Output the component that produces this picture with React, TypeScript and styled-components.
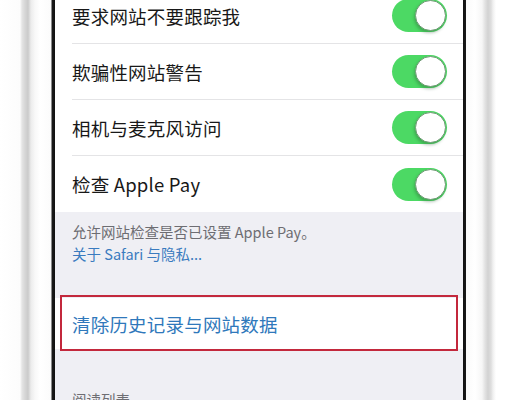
import React from "react";
import styled, { createGlobalStyle } from "styled-components";

const GlobalStyle = createGlobalStyle`
  html, body {
    margin: 0;
    padding: 0;
    background: #ffffff;
  }
  body {
    font-family: "Noto Sans CJK SC", "Noto Sans", sans-serif;
  }
`;

const toggles = ["要求网站不要跟踪我", "欺骗性网站警告", "相机与麦克风访问", "检查 Apple Pay"];

const App = () => {
  return (
    <>
      <GlobalStyle />
      <Photo>
        <LeftBezel />
        <Screen>
          <Group>
            {toggles.map((label, i) => (
              <Row key={label} last={i === toggles.length - 1}>
                <Label>{label}</Label>
                <Switch>
                  <Knob />
                </Switch>
              </Row>
            ))}
          </Group>
          <Footer>
            <FooterText>允许网站检查是否已设置 Apple Pay。</FooterText>
            <FooterLink>关于 Safari 与隐私...</FooterLink>
          </Footer>
          <ActionCell>
            <ActionText>清除历史记录与网站数据</ActionText>
            <Highlight />
          </ActionCell>
          <SectionHeader>阅读列表</SectionHeader>
        </Screen>
        <RightBezel />
      </Photo>
    </>
  );
};

export default App;

const Photo = styled.div`
  width: 518px;
  height: 400px;
  display: flex;
  overflow: hidden;
  background: #ffffff;
`;

const LeftBezel = styled.div`
  width: 55px;
  flex-shrink: 0;
  background: linear-gradient(
    to right,
    #ffffff 0px,
    #fcfcfc 20px,
    #e4e4e4 22px,
    #d6d6d6 25px,
    #cacaca 28px,
    #ececec 31px,
    #f8f8f8 35px,
    #ffffff 40px,
    #fbfbfb 51px,
    #1a1a1a 52px,
    #111111 55px
  );
`;

const RightBezel = styled.div`
  width: 55px;
  flex-shrink: 0;
  background: linear-gradient(
    to right,
    #111111 0px,
    #1a1a1a 3px,
    #fafafa 3px,
    #ffffff 12px,
    #f6f6f6 19px,
    #e2e2e2 22px,
    #d2d2d2 25px,
    #dedede 28px,
    #f0f0f0 30px,
    #ffffff 33px
  );
`;

const Screen = styled.div`
  flex: 1;
  background: #efeff4;
  display: flex;
  flex-direction: column;
  overflow: hidden;

  & > * {
    flex-shrink: 0;
  }
`;

const Group = styled.div`
  background: #ffffff;
  margin-top: -12px;
`;

const Row = styled.div<{ last?: boolean }>`
  height: 56px;
  display: flex;
  align-items: center;
  justify-content: space-between;
  margin-left: 17px;
  padding-right: 16px;
  border-bottom: ${(p) => (p.last ? "none" : "1px solid #e4e4e6")};
  box-sizing: border-box;
`;

const Label = styled.span`
  font-size: 18.5px;
  color: #181818;
  letter-spacing: 0.2px;
`;

const Switch = styled.div`
  width: 55px;
  height: 33px;
  border-radius: 17px;
  background: #4cd964;
  display: flex;
  align-items: center;
  justify-content: flex-end;
  padding: 1px;
  box-sizing: border-box;
`;

const Knob = styled.div`
  width: 31px;
  height: 31px;
  border-radius: 50%;
  background: #ffffff;
  box-sizing: border-box;
  border: 1.5px solid #6f9a74;
  box-shadow: -1px 2px 3px rgba(40, 90, 50, 0.35);
`;

const Footer = styled.div`
  padding: 9px 17px 0;
  height: 86px;
  box-sizing: border-box;
  display: flex;
  flex-direction: column;
`;

const FooterText = styled.div`
  font-size: 14.5px;
  line-height: 22px;
  color: #6d6d72;
`;

const FooterLink = styled.div`
  font-size: 14.5px;
  line-height: 22px;
  color: #3a7bbf;
`;

const ActionCell = styled.div`
  position: relative;
  height: 51px;
  background: #ffffff;
  display: flex;
  align-items: center;
  padding-left: 17px;
`;

const ActionText = styled.span`
  font-size: 18.5px;
  color: #2f78bb;
  letter-spacing: 0.2px;
`;

const Highlight = styled.div`
  position: absolute;
  left: 5px;
  right: 5px;
  top: -3px;
  bottom: -2px;
  border: 2px solid #c3283c;
  pointer-events: none;
`;

const SectionHeader = styled.div`
  margin-top: 40px;
  padding-left: 17px;
  font-size: 14.5px;
  color: #6d6d72;
`;
